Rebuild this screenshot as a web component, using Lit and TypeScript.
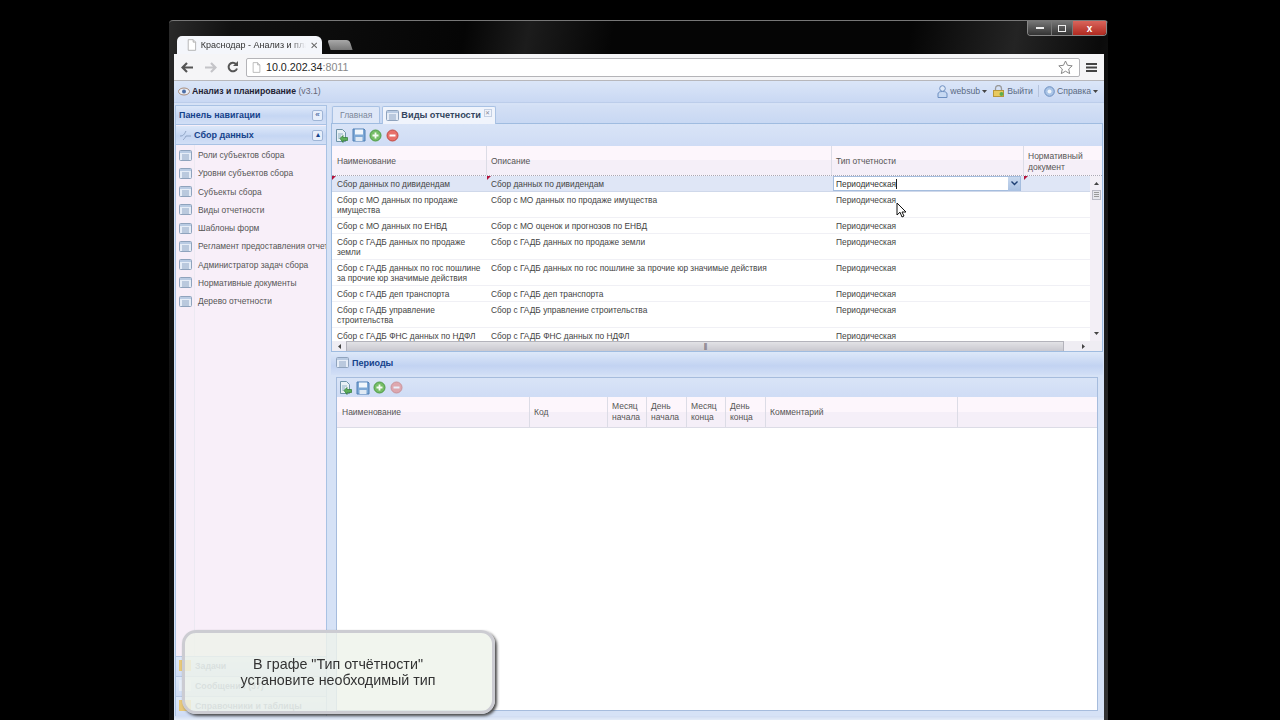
import { LitElement, html, css } from "lit";
import { customElement } from "lit/decorators.js";

const listIcon = (w = 13, h = 11) => html`<svg class="ic" width=${w} height=${h} viewBox="0 0 13 11"><rect x=".5" y=".5" width="12" height="10" rx="1" fill="#e6edf7" stroke="#8fa3bd"/><rect x="1" y="1" width="11" height="2" fill="#b9cbe3"/><path d="M3 5h7M3 7h7M3 9h7" stroke="#8ea5c4" stroke-width="1"/></svg>`;
const exportIcon = html`<svg width="15" height="15" viewBox="0 0 15 15"><path d="M2.5 1.5h6l3 3v9h-9z" fill="#e8f0f4" stroke="#6f93a8"/><path d="M4 6h5M4 8h3M4 10h3" stroke="#8fb0c4"/><path d="M6 10.5l3-3v2h4.500v3H9v2z" fill="#5cae58" stroke="#2f7a33" stroke-width=".7"/></svg>`;
const saveIcon = html`<svg width="14" height="14" viewBox="0 0 14 14"><path d="M1 1h11l1 1v11H1z" fill="#7fa9d6" stroke="#4f7fb4"/><rect x="3" y="1.500" width="8" height="5" fill="#f2f7fc"/><rect x="3.500" y="9" width="7" height="4" fill="#dfe9f4"/></svg>`;
const addIcon = (c = "") => html`<svg class=${c} width="13" height="13" viewBox="0 0 13 13"><circle cx="6.500" cy="6.500" r="5.500" fill="#76bd66" stroke="#4d9a45"/><path d="M6.500 3.500v6M3.500 6.500h6" stroke="#f4fbf2" stroke-width="1.800"/></svg>`;
const delIcon = (c = "") => html`<svg class=${c} width="13" height="13" viewBox="0 0 13 13"><circle cx="6.500" cy="6.500" r="5.500" fill="#e8706a" stroke="#c04a44"/><path d="M3.500 6.500h6" stroke="#fff" stroke-width="2"/></svg>`;
const pageIcon = (s = 14) => html`<svg width=${s - 2} height=${s} viewBox="0 0 12 14"><path d="M1.500 .5h6l3 3v10h-9z" fill="#fff" stroke="#a8a8a8"/><path d="M7.500 .5v3h3" fill="#e8e8e8" stroke="#a8a8a8"/></svg>`;
const dropArrow = html`<svg width="5" height="3" viewBox="0 0 5 3"><path d="M0 0h5L2.500 3z" fill="#444"/></svg>`;

const items = ["Роли субъектов сбора", "Уровни субъектов сбора", "Субъекты сбора", "Виды отчетности", "Шаблоны форм", "Регламент предоставления отчетности", "Администратор задач сбора", "Нормативные документы", "Дерево отчетности"];
const rows: [string, string][] = [
  ["Сбор с МО данных по продаже имущества", "Сбор с МО данных по продаже имущества"],
  ["Сбор с МО данных по ЕНВД", "Сбор с МО оценок и прогнозов по ЕНВД"],
  ["Сбор с ГАДБ данных по продаже земли", "Сбор с ГАДБ данных по продаже земли"],
  ["Сбор с ГАДБ данных по гос пошлине за прочие юр значимые действия", "Сбор с ГАДБ данных по гос пошлине за прочие юр значимые действия"],
  ["Сбор с ГАДБ деп транспорта", "Сбор с ГАДБ деп транспорта"],
  ["Сбор с ГАДБ управление строительства", "Сбор с ГАДБ управление строительства"],
  ["Сбор с ГАДБ ФНС данных по НДФЛ", "Сбор с ГАДБ ФНС данных по НДФЛ"],
];
const periodCols = ["Наименование", "Код", "Месяц начала", "День начала", "Месяц конца", "День конца", "Комментарий", ""];

@customElement("app-root")
export class AppRoot extends LitElement {
  static styles = css`
    :host { display: block; width: 1280px; height: 720px; background: #000; position: relative; overflow: hidden; font-family: "Liberation Sans", Arial, sans-serif; font-size: 9px; color: #444; }
    .win { width: 939px; height: 700px; margin: 20px 0 0 169px; box-sizing: border-box; padding: 0 4px 0 5px; display: flex; flex-direction: column; border-radius: 4px 4px 0 0; border-top: 1px solid #777;
      background: linear-gradient(100deg, #2a2a2a 0, #111 6%, #050505 28%, #1c1c1c 34%, #050505 42%, #050505 70%, #242424 80%, #0a0a0a 88%, #333 100%); filter: blur(.4px); }
    .title { height: 33px; flex: none; display: flex; align-items: flex-end; position: relative; }
    .tab { width: 145px; height: 18px; margin-left: 3px; box-sizing: border-box; background: #f4f6fb; border-radius: 5px 6px 0 0; display: flex; align-items: center; gap: 4px; padding: 0 4px 0 10px; font-size: 9px; color: #333; white-space: nowrap; }
    .tab .t { width: 107px; overflow: hidden; -webkit-mask-image: linear-gradient(90deg, #000 85%, transparent); mask-image: linear-gradient(90deg, #000 85%, transparent); }
    .tab .x { color: #666; font-size: 10px; }
    .newtab { width: 22px; height: 10px; margin: 0 0 4px 7px; background: linear-gradient(#a8a8a8, #787878); border-radius: 2px 3px 0 0; transform: skewX(18deg); }
    .ctl { position: absolute; right: -3px; top: 0; width: 80px; height: 15px; display: flex; border: 1px solid #888; border-top: none; border-radius: 0 0 4px 4px; box-sizing: border-box; overflow: hidden; }
    .ctl div { display: flex; align-items: center; justify-content: center; height: 100%; background: linear-gradient(#777, #333); }
    .ctl .mn { width: 23px; } .ctl .mx { width: 20px; border-left: 1px solid #777; border-right: 1px solid #777; } .ctl .cl { flex: 1; background: linear-gradient(#d9655c, #b02a20); color: #fff; font: bold 10px "Liberation Sans", sans-serif; }
    .bar { height: 27px; flex: none; background: #f5f5f7; border-bottom: 1px solid #b7b7bb; box-sizing: border-box; display: flex; align-items: center; padding: 0 5px 0 7px; }
    .nav { width: 65px; display: flex; align-items: center; gap: 10px; flex: none; }
    .addr { flex: 1; height: 19px; background: #fff; border: 1px solid #b4b4b8; box-sizing: border-box; border-radius: 2px; display: flex; align-items: center; padding: 0 6px 0 5px; gap: 5px; font-size: 10.700px; color: #222; }
    .addr .port { color: #888; } .addr .star { margin-left: auto; }
    .burger { width: 17px; display: flex; justify-content: flex-end; padding-right: 2px; box-sizing: content-box; flex: none; }
    .apphead { height: 22px; flex: none; background: linear-gradient(#dbe6f8, #c9d8f3); display: flex; align-items: center; padding: 0 6px 1px 4px; border-bottom: 1px solid #bccdea; box-sizing: border-box; font-size: 8.700px; color: #456; gap: 2px; }
    .apphead b { color: #223; } .apphead .v { color: #667; }
    .right { margin-left: auto; display: flex; align-items: center; gap: 2px; color: #5a6a82; font-size: 8.700px; }
    .right .gap { width: 1px; }
    .sep { width: 1px; height: 12px; background: #b5c3dc; margin: 0 3px; }
    .main { flex: 1; min-height: 0; display: flex; gap: 4px; background: #d6e2f6; padding: 2px 1px 0 1px; }
    .left { width: 152px; flex: none; display: flex; flex-direction: column; background: #f8eff9; border: 1px solid #a9c2e4; border-bottom: none; box-sizing: border-box; }
    .lh { height: 18px; flex: none; background: linear-gradient(#dde8f9, #c5d6f3 55%, #d2dff6); display: flex; align-items: center; justify-content: space-between; padding: 0 3px; font-weight: bold; color: #15428b; font-size: 8.900px; border-bottom: 1px solid #a9c2e4; box-sizing: content-box; }
    .lh.g { height: 18px; margin-top: 1px; font-size: 9px; } .lh.g span { display: flex; align-items: center; gap: 2px; }
    .btn { width: 11px; height: 11px; background: #e6eefa; border: 1px solid #9fb5d6; box-sizing: border-box; border-radius: 2px; display: flex; align-items: center; justify-content: center; color: #15428b; font-size: 8px; line-height: 8px; font-weight: normal; }
    .nl { flex: 1; min-height: 0; padding-top: 1px; display: flex; flex-direction: column; background: linear-gradient(90deg, #f7eef8 0 18px, #ece9f2 18px 19px, #f8eff9 19px); }
    .ni { height: 18.250px; flex: none; display: flex; align-items: center; gap: 6px; padding-left: 3px; white-space: nowrap; overflow: hidden; color: #555; font-size: 8.400px; }
    .ni .ic { flex: none; }
    .acc { height: 20px; flex: none; display: flex; align-items: center; gap: 4px; padding: 0 0 2px 3px; color: #7a8aa8; font-weight: bold; font-size: 8.800px; background: linear-gradient(#dde8f9, #cfdcf5); border-top: 1px solid #b7c9e6; box-sizing: border-box; }
    .acc i { width: 12px; height: 11px; background: #e8c878; display: block; }
    .acc i.m { background: #e6edf7; }
    .rt { flex: 1; min-width: 0; display: flex; flex-direction: column; }
    .tabs { height: 18px; flex: none; display: flex; align-items: flex-end; gap: 2px; padding-left: 1px; background: linear-gradient(#d4e0f5, #c8d8f3); border-bottom: 1px solid #9fbce0; }
    .tb { height: 17px; box-sizing: border-box; border: 1px solid #a9c2e4; border-bottom: none; border-radius: 2px 2px 0 0; display: flex; align-items: center; padding: 0 7px 1px; font-size: 8.500px; background: #dfe8f8; color: #7a8699; }
    .tb.on { background: #f0f4fc; color: #34465f; font-weight: bold; font-size: 9.200px; gap: 2px; padding: 0 3px 1px 3px; height: 18px; margin-bottom: -1px; }
    .tb .cx { width: 6px; height: 6px; margin-left: 1px; font-size: 6px; line-height: 6px; color: #889; font-weight: normal; margin-top: -5px; border: 1px solid #c3cfe3; }
    .pane { height: 228px; flex: none; box-sizing: border-box; border: 1px solid #9fbce0; border-top: none; display: flex; flex-direction: column; overflow: hidden; background: #fff; }
    .tool { height: 22px; flex: none; background: linear-gradient(#d9e4f7, #cfdcf5); display: grid; grid-auto-flow: column; grid-auto-columns: 17px; justify-content: start; justify-items: center; align-items: center; padding-left: 1px; }
    .faded { opacity: .5; }
    .grid { display: grid; grid-template-columns: 155px 345px 192px 64px 12px; }
    .ghead { height: 30px; flex: none; background: linear-gradient(#fdf6fc 50%, #f5eff8 50%); border-bottom: 1px dotted #a9a9b4; box-sizing: border-box; align-items: stretch; }
    .ghead div { border-right: 1px solid #dcdce6; padding: 2px 3px 0 4px; display: flex; align-items: center; line-height: 11px; color: #555; font-size: 8.500px; }
    .ghead div:first-child { padding-left: 5px; }
    .ghead div:nth-child(4) { border-right: none; white-space: normal; }
    .gbody { flex: 1; min-height: 0; overflow: hidden; position: relative; }
    .row { border-bottom: 1px solid #f0f0f5; box-sizing: border-box; }
    .row > div { padding: 3px 2px 2px 4px; line-height: 10px; color: #444; position: relative; font-size: 8.350px; white-space: normal; }
    .row > div:first-child { padding-left: 5px; }
    .row.sel { height: 16px; background: #dfe6f6; border-bottom: 1px solid #cfd8ea; }
    .flag { position: absolute; left: 0; top: 0; width: 0; height: 0; border-top: 4px solid #b3123c; border-right: 4px solid transparent; }
    .row.sel > .edit { padding: 0 3px 0 1px; }
    .field { height: 15px; display: flex; align-items: center; background: #fff; border: 1px solid #a5bdde; box-sizing: border-box; padding: 1px 0 0 2px; color: #333; }
    .caret { width: 1px; height: 10px; background: #222; }
    .trig { margin: -1px 0 0 auto; width: 12px; height: 14px; background: linear-gradient(#c8d8ee, #a9c1e2); display: flex; align-items: center; justify-content: center; }
    .vs { position: absolute; right: 0; top: 0; bottom: 0; width: 12px; background: #f3eff6; display: flex; flex-direction: column; align-items: center; justify-content: space-between; padding: 6px 0 6px; box-sizing: border-box; }
    .thumb { position: absolute; top: 14px; left: 2px; width: 9px; height: 10px; background: #e6e6ec; border: 1px solid #b9b9c4; box-sizing: border-box; display: flex; flex-direction: column; gap: 1px; padding: 1px; }
    .thumb i { display: block; height: 1px; background: #999; }
    .hs { height: 10px; flex: none; background: #efedf3; display: flex; align-items: center; }
    .hs .a { width: 14px; display: flex; justify-content: center; flex: none; }
    .hs .th { width: 718px; height: 10px; flex: none; background: linear-gradient(#e2e2e6, #c9c8cf); border: 1px solid #b3b3bb; border-width: 1px 1px 0 1px; box-sizing: border-box; font-size: 7px; color: #666; line-height: 8px; text-align: center; letter-spacing: -1px; }
    .hs .rest { flex: 1; display: flex; justify-content: center; }
    .per { flex: 1; min-height: 0; display: flex; flex-direction: column; background: #d6e2f6; }
    .ph { height: 23px; flex: none; box-sizing: border-box; padding: 0 0 2px 5px; background: linear-gradient(#dde8f9, #c2d3f2 60%, #d2dff6); display: flex; align-items: center; gap: 3px; color: #15428b; font-weight: bold; font-size: 9px; }
    .pbox { flex: 1; min-height: 0; margin: 2px 5px 5px; background: #fff; border: 1px solid #a6bcdd; display: flex; flex-direction: column; }
    .pbox .tool { height: 19px; padding-left: 0; }
    .pgrid { height: 30px; flex: none; display: grid; grid-template-columns: 193px 78px 39px 40px 39px 40px 192px 1fr; background: linear-gradient(#fdf6fc 50%, #f5eff8 50%); border-bottom: 1px solid #dcdce6; }
    .pgrid div { border-right: 1px solid #dcdce6; padding: 0 2px 0 4px; display: flex; align-items: center; line-height: 11px; color: #555; font-size: 8.500px; }
    .pgrid div:first-child { padding-left: 5px; }
    .pgrid div:last-child { border-right: none; }
    .bottom { height: 4px; flex: none; background: linear-gradient(#d0dcf2, #e4ecf8); }
    .callout { position: absolute; left: 182px; top: 630px; width: 313px; height: 84px; box-sizing: border-box; border: 3px solid #ccccd2; border-radius: 14px; background: rgba(238, 243, 234, .82); box-shadow: 2px 2px 3px #4a4a4a; display: flex; align-items: center; justify-content: center; text-align: center; font-size: 14.300px; line-height: 16px; color: #333; padding: 0 1px 1px 0; }
    .cursor { position: absolute; left: 896px; top: 202px; }
  `;

  render() {
    return html`
      <div class="win">
        <div class="title">
          <div class="tab">${pageIcon(12)}<span class="t">Краснодар - Анализ и планирование</span><span class="x">✕</span></div>
          <div class="newtab"></div>
          <div class="ctl"><div class="mn"><svg width="8" height="3"><rect width="8" height="2" fill="#eee"/></svg></div><div class="mx"><svg width="8" height="7"><rect x=".5" y=".5" width="7" height="6" fill="none" stroke="#eee"/></svg></div><div class="cl">x</div></div>
        </div>
        <div class="bar">
          <div class="nav">
            <svg width="13" height="11" viewBox="0 0 13 11"><path d="M6 1L1.500 5.500 6 10M2 5.500h10" fill="none" stroke="#555" stroke-width="2.200"/></svg>
            <svg width="13" height="11" viewBox="0 0 13 11"><path d="M7 1l4.500 4.500L7 10M11 5.500H1" fill="none" stroke="#c4c4c8" stroke-width="2.200"/></svg>
            <svg width="12" height="12" viewBox="0 0 12 12"><path d="M10 7.500A4.300 4.300 0 1 1 9 3" fill="none" stroke="#555" stroke-width="2"/><path d="M11 0v5H6z" fill="#555"/></svg>
          </div>
          <div class="addr">${pageIcon(11)}<span>10.0.202.34<span class="port">:8011</span></span>
            <svg class="star" width="15" height="14" viewBox="0 0 15 14"><path d="M7.500 1l2 4.300 4.700.5-3.500 3.200 1 4.600-4.200-2.400-4.200 2.400 1-4.600L.8 5.800l4.700-.5z" fill="#fff" stroke="#888"/></svg>
          </div>
          <div class="burger"><svg width="11" height="9"><path d="M0 1h11M0 4.500h11M0 8h11" stroke="#444" stroke-width="1.800"/></svg></div>
        </div>
        <div class="apphead">
          <svg width="12" height="9" viewBox="0 0 12 9"><ellipse cx="6" cy="4.500" rx="5.500" ry="3.500" fill="#e9edf5" stroke="#a98c7c"/><circle cx="6" cy="4.500" r="2" fill="#4d6fa8"/></svg>
          <span><b>Анализ и планирование</b> <span class="v">(v3.1)</span></span>
          <div class="right">
            <svg width="11" height="13" viewBox="0 0 11 13"><circle cx="5.500" cy="3.500" r="2.800" fill="#dfe9f7" stroke="#6d8fc0"/><path d="M1 12.500V9q0-2.500 4.500-2.500T10 9v3.500z" fill="#c7d9f2" stroke="#6d8fc0"/></svg>
            <span>websub</span>${dropArrow}<span class="gap"></span>
            <svg width="13" height="12" viewBox="0 0 13 12"><path d="M3.500 6V3.500a3 3 0 0 1 6 0V6" fill="none" stroke="#999" stroke-width="1.300"/><rect x="1.500" y="5.500" width="10" height="6" fill="#e8c95e" stroke="#b8963a"/><circle cx="9.500" cy="9" r="2" fill="#5fae4c"/></svg>
            <span>Выйти</span><span class="sep"></span>
            <svg width="11" height="11" viewBox="0 0 11 11"><circle cx="5.500" cy="5.500" r="4.800" fill="#a9c4e6" stroke="#6d8fc0"/><circle cx="5.500" cy="5.500" r="2" fill="#eef4fb"/></svg>
            <span>Справка</span>${dropArrow}
          </div>
        </div>
        <div class="main">
          <div class="left">
            <div class="lh"><span>Панель навигации</span><span class="btn">«</span></div>
            <div class="lh g"><span><svg width="13" height="12" viewBox="0 0 13 12"><path d="M1 7c3 0 4-1 6-5M7 7h5M7 7c-1 2-2 3-3 4" fill="none" stroke="#8fa3c4"/></svg>Сбор данных</span><span class="btn">▴</span></div>
            <div class="nl">${items.map((t) => html`<div class="ni">${listIcon()}<span>${t}</span></div>`)}</div>
            <div class="acc"><i></i>Задачи</div>
            <div class="acc"><i class="m"></i>Сообщения (37)</div>
            <div class="acc"><i></i>Справочники и таблицы</div>
          </div>
          <div class="rt">
            <div class="tabs">
              <div class="tb">Главная</div>
              <div class="tb on">${listIcon()}<span>Виды отчетности</span><span class="cx">✕</span></div>
            </div>
            <div class="pane">
              <div class="tool">${exportIcon}${saveIcon}${addIcon()}${delIcon()}</div>
              <div class="grid ghead"><div>Наименование</div><div>Описание</div><div>Тип отчетности</div><div>Нормативный документ</div></div>
              <div class="gbody">
                <div class="grid row sel">
                  <div><span class="flag"></span>Сбор данных по дивидендам</div>
                  <div><span class="flag"></span>Сбор данных по дивидендам</div>
                  <div class="edit"><div class="field">Периодическая<span class="caret"></span><span class="trig"><svg width="7" height="5" viewBox="0 0 7 5"><path d="M.5 .5l3 3 3-3" fill="none" stroke="#1d3f73" stroke-width="1.400"/></svg></span></div></div>
                  <div><span class="flag"></span></div>
                </div>
                ${rows.map((r) => html`<div class="grid row"><div>${r[0]}</div><div>${r[1]}</div><div>Периодическая</div><div></div></div>`)}
                <div class="vs">
                  <svg width="5" height="3"><path d="M0 3h5L2.500 0z" fill="#444"/></svg>
                  <svg width="5" height="3"><path d="M0 0h5L2.500 3z" fill="#444"/></svg>
                  <div class="thumb"><i></i><i></i><i></i></div>
                </div>
              </div>
              <div class="hs"><span class="a"><svg width="3" height="5"><path d="M3 0v5L0 2.500z" fill="#444"/></svg></span><div class="th">|||</div><div class="rest"><svg width="3" height="5"><path d="M0 0v5L3 2.500z" fill="#444"/></svg></div></div>
            </div>
            <div class="per">
              <div class="ph">${listIcon()}<span>Периоды</span></div>
              <div class="pbox">
                <div class="tool">${exportIcon}${saveIcon}${addIcon()}${delIcon("faded")}</div>
                <div class="pgrid">${periodCols.map((c) => html`<div>${c}</div>`)}</div>
              </div>
            </div>
          </div>
        </div>
        <div class="bottom"></div>
      </div>
      <div class="callout"><div>В графе "Тип отчётности"<br />установите необходимый тип</div></div>
      <svg class="cursor" width="12" height="16" viewBox="0 0 12 16"><path d="M1 1v12l3-2.800L6 15l2-1-2-4h4z" fill="#fff" stroke="#111"/></svg>
    `;
  }
}
